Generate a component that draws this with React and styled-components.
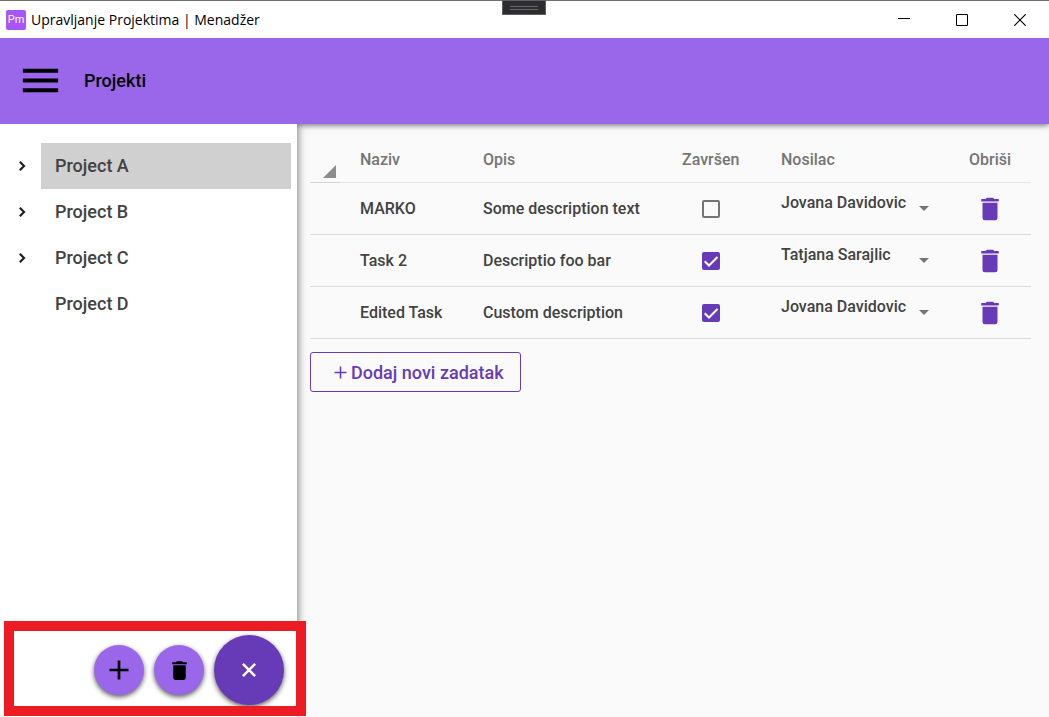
import React, { useState } from "react";
import styled, { createGlobalStyle, css } from "styled-components";

const color = {
  primary: "#673ab7",
  light: "#9a67ea",
  text: "#424242",
  muted: "#757575",
  line: "#dadada",
  paper: "#fafafa",
};

const GlobalStyle = createGlobalStyle`
  *, *::before, *::after { box-sizing: border-box; }
  body { margin: 0; background: ${color.paper}; }
  button, input, select { font: inherit; color: inherit; margin: 0; }
`;

const Window = styled.div`
  position: relative;
  display: flex;
  flex-direction: column;
  min-height: 100vh;
  background: ${color.paper};
  color: ${color.text};
  font-family: Roboto, "Liberation Sans", sans-serif;
  font-weight: 500;
  overflow: hidden;
`;

const TitleBar = styled.div`
  display: flex;
  align-items: center;
  height: 38px;
  padding-left: 6px;
  background: #fff;
  border-top: 1px solid #707070;
  color: #000;
`;

const AppBadge = styled.span`
  display: grid;
  place-items: center;
  width: 20px;
  height: 20px;
  border-radius: 2px;
  background: #a855f7;
  color: #fff;
  font-size: 11px;
  font-weight: 400;
`;

const WindowTitle = styled.span`
  flex: 1;
  padding-left: 5px;
  font-family: "Open Sans", "Noto Sans", sans-serif;
  font-size: 14px;
  font-weight: 400;
  white-space: nowrap;
`;

const WindowButton = styled.button`
  display: grid;
  place-items: center;
  width: 58px;
  height: 36px;
  padding: 0;
  border: 0;
  background: none;
`;

const DebugTab = styled.div`
  position: absolute;
  top: 0;
  left: 50%;
  display: grid;
  place-items: center;
  width: 44px;
  height: 15px;
  margin-left: -23px;
  border: 1px solid #5f5f63;
  background: #2d2d30;

  &::after {
    content: "";
    width: 28px;
    height: 4px;
    border: solid #68686c;
    border-width: 1px 0;
  }
`;

const AppBar = styled.header`
  position: relative;
  z-index: 1;
  display: flex;
  align-items: center;
  gap: 20px;
  height: 86px;
  padding: 0 17px 1px;
  background: ${color.light};
  color: #000;
  box-shadow: 0 1px 6px rgba(0, 0, 0, 0.6);
  clip-path: inset(0 0 -12px 0);
`;

const IconButton = styled.button`
  display: grid;
  place-items: center;
  padding: 0;
  border: 0;
  background: none;
  color: ${(p) => p.$color || "inherit"};
  cursor: pointer;
`;

const PageTitle = styled.h1`
  margin: 0;
  font-size: 18px;
  font-weight: 500;
`;

const Body = styled.div`
  display: flex;
  flex: 1;
`;

const Sidebar = styled.aside`
  position: relative;
  z-index: 2;
  display: flex;
  flex-direction: column;
  justify-content: space-between;
  flex: 0 0 297px;
  background: #fff;
  box-shadow: 1px 0 8px rgba(0, 0, 0, 0.5);
  clip-path: inset(0 -16px 0 0);
`;

const Tree = styled.ul`
  margin: 0;
  padding: 19px 6px 0 0;
  list-style: none;
`;

const TreeItem = styled.li`
  display: flex;
  height: 46px;
`;

const Expander = styled.div`
  display: grid;
  place-items: center;
  width: 41px;
  padding-left: 2px;
`;

const TreeLabel = styled.button`
  flex: 1;
  padding: 0 14px 2px;
  border: 0;
  background: ${(p) => (p.$selected ? "#d0d0d0" : "none")};
  font-size: 18px;
  text-align: left;
  cursor: pointer;
`;

const Actions = styled.div`
  display: flex;
  align-items: center;
  justify-content: flex-end;
  gap: 10px;
  padding: 12px 13px;
`;

const RoundButton = styled.button`
  display: grid;
  place-items: center;
  width: 50px;
  height: 50px;
  padding: 0;
  border: 0;
  border-radius: 50%;
  background: ${color.light};
  color: #000;
  box-shadow: 0 2px 5px rgba(0, 0, 0, 0.65);
  cursor: pointer;

  ${(p) =>
    p.$large &&
    css`
      width: 70px;
      height: 70px;
      background: ${color.primary};
      color: #fff;
    `}
`;

const Highlight = styled.div`
  position: absolute;
  z-index: 3;
  left: 4px;
  bottom: 1px;
  width: 302px;
  height: 95px;
  border: 10px solid #ed1c24;
  pointer-events: none;
`;

const Main = styled.main`
  flex: 1;
  min-width: 0;
  padding: 13px 18px 13px 13px;
`;

const Table = styled.table`
  width: 100%;
  table-layout: fixed;
  border-collapse: separate;
  border-spacing: 0;
  font-size: 16px;
`;

const Col = styled.col`
  width: ${(p) => (p.$width ? `${p.$width}px` : "auto")};
`;

const HeadCell = styled.th`
  height: 46px;
  padding: 0 0 0 20px;
  border-bottom: 1px solid ${(p) => (p.$corner ? "#d4d4d4" : "#e4e4e4")};
  color: ${color.muted};
  font-weight: 500;
  text-align: left;

  ${(p) =>
    p.$corner &&
    css`
      padding: 0 4px 4px 0;
      vertical-align: bottom;
      text-align: right;
      line-height: 0;
    `}
`;

const Cell = styled.td`
  height: 52px;
  padding: 0 0 0 20px;
  border-bottom: 1px solid ${color.line};
  white-space: nowrap;
`;

const Centered = styled.div`
  display: flex;
  justify-content: center;
  padding-right: ${(p) => p.$inset || 0}px;
`;

const CheckLabel = styled.label`
  display: grid;
  place-items: center;

  & > * {
    grid-area: 1 / 1;
  }
  svg {
    pointer-events: none;
  }
`;

const CheckInput = styled.input`
  appearance: none;
  width: 18px;
  height: 18px;
  border: 2px solid ${color.muted};
  border-radius: 2px;

  &:checked {
    border-color: ${color.primary};
    background: ${color.primary};
  }
`;

const Picker = styled.label`
  display: grid;
  align-items: center;
  width: 148px;

  & > * {
    grid-area: 1 / 1;
  }
  svg {
    justify-self: end;
    pointer-events: none;
  }
`;

const PickerSelect = styled.select`
  appearance: none;
  width: 100%;
  padding: 0 16px 12px 0;
  border: 0;
  background: none;
`;

const AddTask = styled.button`
  display: flex;
  align-items: center;
  justify-content: center;
  gap: 4px;
  height: 40px;
  margin-top: 13px;
  padding: 0 16px 0 23px;
  border: 1px solid ${color.primary};
  border-radius: 3px;
  background: none;
  color: ${color.primary};
  font-size: 18px;
  cursor: pointer;
`;

const Trash = ({ size }) => (
  <svg width={size} height={size} viewBox="0 0 24 24" fill="currentColor" aria-hidden="true">
    <path d="M19 4h-3.500l-1-1h-5l-1 1H5v2h14M6 19a2 2 0 0 0 2 2h8a2 2 0 0 0 2-2V7H6v12Z" />
  </svg>
);

const people = ["Jovana Davidovic", "Tatjana Sarajlic"];

const projects = [
  { name: "Project A", expandable: true },
  { name: "Project B", expandable: true },
  { name: "Project C", expandable: true },
  { name: "Project D", expandable: false },
];

const initialTasks = [
  { id: 1, name: "MARKO", description: "Some description text", done: false, owner: people[0] },
  { id: 2, name: "Task 2", description: "Descriptio foo bar", done: true, owner: people[1] },
  { id: 3, name: "Edited Task", description: "Custom description", done: true, owner: people[0] },
];

export default function App() {
  const [selected, setSelected] = useState("Project A");
  const [tasks, setTasks] = useState(initialTasks);
  const update = (id, change) =>
    setTasks((list) => list.map((t) => (t.id === id ? { ...t, ...change } : t)));

  return (
    <Window>
      <GlobalStyle />
      <TitleBar>
        <AppBadge>Pm</AppBadge>
        <WindowTitle>Upravljanje Projektima | Menadžer</WindowTitle>
        <WindowButton aria-label="Minimize">
          <svg width="12" height="12" viewBox="0 0 12 12" shapeRendering="crispEdges">
            <path d="M0 4h12v1H0z" />
          </svg>
        </WindowButton>
        <WindowButton aria-label="Maximize">
          <svg width="12" height="12" viewBox="0 0 12 12" fill="none" stroke="#000">
            <path d="M.5 .5h11v11H.5z" />
          </svg>
        </WindowButton>
        <WindowButton aria-label="Close">
          <svg width="12" height="12" viewBox="0 0 12 12" fill="none" stroke="#000" strokeWidth="1.200">
            <path d="M.3 .3l11.400 11.400M11.700 .3L.3 11.700" />
          </svg>
        </WindowButton>
      </TitleBar>
      <DebugTab />

      <AppBar>
        <IconButton aria-label="Menu">
          <svg width="47" height="47" viewBox="0 0 24 24">
            <path d="M3 6h18v2H3V6m0 5h18v2H3v-2m0 5h18v2H3v-2Z" />
          </svg>
        </IconButton>
        <PageTitle>Projekti</PageTitle>
      </AppBar>

      <Body>
        <Sidebar>
          <Tree>
            {projects.map((p) => (
              <TreeItem key={p.name}>
                <Expander>
                  {p.expandable && (
                    <svg width="8" height="12" viewBox="0 0 8 12" fill="none" stroke="#212121" strokeWidth="2.200">
                      <path d="M1.800 1.800L6 6l-4.200 4.200" />
                    </svg>
                  )}
                </Expander>
                <TreeLabel $selected={p.name === selected} onClick={() => setSelected(p.name)}>
                  {p.name}
                </TreeLabel>
              </TreeItem>
            ))}
          </Tree>
          <Actions>
            <RoundButton aria-label="Add project">
              <svg width="20" height="20" viewBox="0 0 20 20" fill="none" stroke="currentColor" strokeWidth="2.700">
                <path d="M10 .5v19M.5 10h19" />
              </svg>
            </RoundButton>
            <RoundButton aria-label="Delete project">
              <Trash size={25} />
            </RoundButton>
            <RoundButton $large aria-label="Close actions">
              <svg width="14" height="14" viewBox="0 0 14 14" fill="none" stroke="currentColor" strokeWidth="2.500">
                <path d="M.9 .9l12.200 12.200M13.100 .9L.9 13.100" />
              </svg>
            </RoundButton>
          </Actions>
        </Sidebar>

        <Main>
          <Table>
            <colgroup>
              <Col $width={30} />
              <Col $width={123} />
              <Col />
              <Col $width={99} />
              <Col $width={188} />
              <Col $width={82} />
            </colgroup>
            <thead>
              <tr>
                <HeadCell $corner aria-label="Select all">
                  <svg width="13" height="13" viewBox="0 0 13 13" fill="#8c8c8c">
                    <path d="M13 0v13H0z" />
                  </svg>
                </HeadCell>
                <HeadCell>Naziv</HeadCell>
                <HeadCell>Opis</HeadCell>
                <HeadCell>Završen</HeadCell>
                <HeadCell>Nosilac</HeadCell>
                <HeadCell>Obriši</HeadCell>
              </tr>
            </thead>
            <tbody>
              {tasks.map((t) => (
                <tr key={t.id}>
                  <Cell />
                  <Cell>{t.name}</Cell>
                  <Cell>{t.description}</Cell>
                  <Cell>
                    <Centered $inset={22}>
                      <CheckLabel>
                        <CheckInput
                          type="checkbox"
                          aria-label={`Završen: ${t.name}`}
                          checked={t.done}
                          onChange={(e) => update(t.id, { done: e.target.checked })}
                        />
                        {t.done && (
                          <svg width="18" height="18" viewBox="0 0 18 18" fill="none" stroke="#fff" strokeWidth="2">
                            <path d="M2.700 9.300L7 13.500l8.500-8.500" />
                          </svg>
                        )}
                      </CheckLabel>
                    </Centered>
                  </Cell>
                  <Cell>
                    <Picker>
                      <PickerSelect
                        aria-label={`Nosilac: ${t.name}`}
                        value={t.owner}
                        onChange={(e) => update(t.id, { owner: e.target.value })}
                      >
                        {people.map((name) => (
                          <option key={name}>{name}</option>
                        ))}
                      </PickerSelect>
                      <svg width="10" height="5" viewBox="0 0 10 5" fill={color.muted}>
                        <path d="M0 0h10L5 5z" />
                      </svg>
                    </Picker>
                  </Cell>
                  <Cell>
                    <Centered $inset={20}>
                      <IconButton
                        $color={color.primary}
                        aria-label={`Obriši: ${t.name}`}
                        onClick={() => setTasks((list) => list.filter((x) => x.id !== t.id))}
                      >
                        <Trash size={30} />
                      </IconButton>
                    </Centered>
                  </Cell>
                </tr>
              ))}
            </tbody>
          </Table>
          <AddTask>
            <svg width="13" height="13" viewBox="0 0 13 13" fill="none" stroke="currentColor" strokeWidth="1.600">
              <path d="M6.500 .5v12M.5 6.500h12" />
            </svg>
            Dodaj novi zadatak
          </AddTask>
        </Main>
      </Body>
      <Highlight />
    </Window>
  );
}
